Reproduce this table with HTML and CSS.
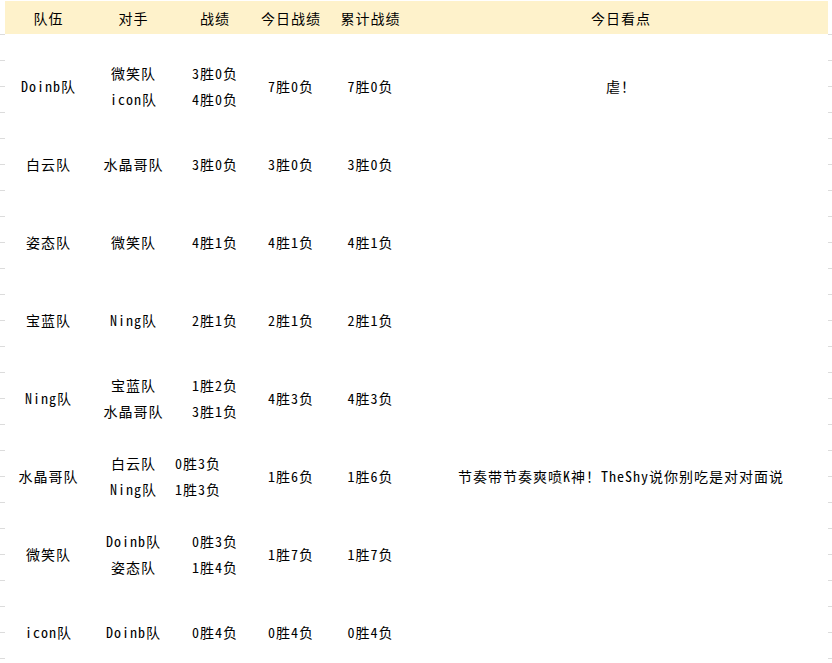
FILE: index.html
```html
<!DOCTYPE html>
<html lang="zh">
<head>
<meta charset="utf-8">
<title>战绩表</title>
<link rel="stylesheet" href="styles.css">
</head>
<body>
<div class="top">
  <div class="head">
    <div>队伍</div><div>对手</div><div>战绩</div><div>今日战绩</div><div>累计战绩</div><div>今日看点</div>
  </div>
</div>
<div class="rows">
  <div class="table">
    <div class="spacer"></div>

    <div class="c">Doinb队</div>
    <div class="c"><span>微笑队</span><span>icon队</span></div>
    <div class="c"><span>3胜0负</span><span>4胜0负</span></div>
    <div class="c">7胜0负</div>
    <div class="c">7胜0负</div>
    <div class="c">虐！</div>

    <div class="c">白云队</div>
    <div class="c">水晶哥队</div>
    <div class="c">3胜0负</div>
    <div class="c">3胜0负</div>
    <div class="c">3胜0负</div>
    <div class="c"></div>

    <div class="c">姿态队</div>
    <div class="c">微笑队</div>
    <div class="c">4胜1负</div>
    <div class="c">4胜1负</div>
    <div class="c">4胜1负</div>
    <div class="c"></div>

    <div class="c">宝蓝队</div>
    <div class="c">Ning队</div>
    <div class="c">2胜1负</div>
    <div class="c">2胜1负</div>
    <div class="c">2胜1负</div>
    <div class="c"></div>

    <div class="c">Ning队</div>
    <div class="c"><span>宝蓝队</span><span>水晶哥队</span></div>
    <div class="c"><span>1胜2负</span><span>3胜1负</span></div>
    <div class="c">4胜3负</div>
    <div class="c">4胜3负</div>
    <div class="c"></div>

    <div class="c">水晶哥队</div>
    <div class="c"><span>白云队</span><span>Ning队</span></div>
    <div class="c left"><span>0胜3负</span><span>1胜3负</span></div>
    <div class="c">1胜6负</div>
    <div class="c">1胜6负</div>
    <div class="c">节奏带节奏爽喷K神！TheShy说你别吃是对对面说</div>

    <div class="c">微笑队</div>
    <div class="c"><span>Doinb队</span><span>姿态队</span></div>
    <div class="c"><span>0胜3负</span><span>1胜4负</span></div>
    <div class="c">1胜7负</div>
    <div class="c">1胜7负</div>
    <div class="c"></div>

    <div class="c">icon队</div>
    <div class="c">Doinb队</div>
    <div class="c">0胜4负</div>
    <div class="c">0胜4负</div>
    <div class="c">0胜4负</div>
    <div class="c"></div>
  </div>
</div>
</body>
</html>
```

FILE: styles.css
```css
html, body {
  margin: 0;
  padding: 0;
  background: #fff;
  overflow: hidden;
}

body {
  font-family: "Noto Sans Mono CJK SC", "Noto Sans CJK SC", "DejaVu Sans Mono", monospace;
  font-size: 14px;
  font-weight: 300;
  letter-spacing: 1px;
  color: #000;
}

.top {
  padding: 1px 4px 0 5px;
}

.head {
  display: grid;
  grid-template-columns: 87px 83px 80px 72px 87px 414px;
  height: 33px;
  background: #fef2cb;
}

.head > div {
  display: flex;
  align-items: center;
  justify-content: center;
  line-height: 20px;
}

.rows {
  padding: 0 4px 0 5px;
  background-image: repeating-linear-gradient(to bottom, #dcdcdc 0 1px, transparent 1px 26px);
}

.table {
  display: grid;
  grid-template-columns: 87px 83px 80px 72px 87px 414px;
  grid-template-rows: 13px;
  grid-auto-rows: 78px;
  background: #fff;
}

.spacer {
  grid-column: 1 / -1;
}

.c {
  display: flex;
  flex-direction: column;
  align-items: center;
  justify-content: center;
  line-height: 26px;
  white-space: nowrap;
}

.c.left {
  align-items: flex-start;
}
```
